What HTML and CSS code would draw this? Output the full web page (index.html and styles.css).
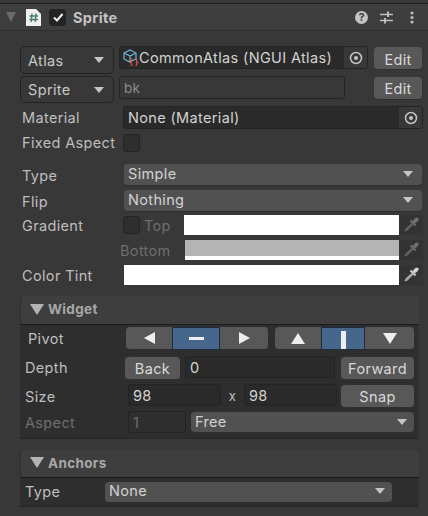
FILE: index.html
```html
<!DOCTYPE html>
<html>
<head>
    <title>Sprite Inspector</title>
    <link rel="stylesheet" href="styles.css">
</head>
<body>
    <svg class="defs">
        <defs>
            <g id="target">
                <circle cx="7" cy="7" r="5.5" fill="none" stroke="currentColor" stroke-width="1.5"/>
                <circle cx="7" cy="7" r="2" fill="currentColor"/>
            </g>
            <g id="dropper">
                <path d="M9.500 4 L12 6.500 L15 3.800 Q16.300 2.300 15.200 1 Q14 -0.200 12.300 1 Z" fill="currentColor"/>
                <path d="M7.500 3.500 L12.500 8.500" stroke="currentColor" stroke-width="1.800"/>
                <path d="M8.500 6 L10.300 7.800 L4.500 13.500 L2 14.500 L1.500 14 L2.600 11.500 Z" fill="currentColor" opacity="0.75"/>
            </g>
        </defs>
    </svg>

    <header class="header">
        <span class="fold"></span>
        <svg class="script-icon" width="15" height="17" viewBox="0 0 15 17">
            <path d="M0 0 H10 L15 5 V17 H0 Z" fill="#efefef"/>
            <path d="M6 4.500 L5.200 13 M10 4.500 L9.200 13 M3.500 7 H12 M3.500 10.500 H12" stroke="#44805f" stroke-width="1.400" fill="none"/>
        </svg>
        <span class="header-check">
            <svg width="12" height="12" viewBox="0 0 12 12"><path d="M2 6.500 L5 9.500 L10.500 3" fill="none" stroke="#eeeeee" stroke-width="2"/></svg>
        </span>
        <span class="header-title">Sprite</span>
        <span class="header-icons">
            <span class="help">?</span>
            <svg width="13" height="13" viewBox="0 0 13 13">
                <path d="M0 3.500 H13 M0 9.500 H13" stroke="#bdbdbd" stroke-width="1.300"/>
                <path d="M8 0.500 V6 M5 7 V12.500" stroke="#bdbdbd" stroke-width="2"/>
            </svg>
            <svg class="dots" width="4" height="13" viewBox="0 0 4 13">
                <circle cx="2" cy="2" r="1.600" fill="#bdbdbd"/>
                <circle cx="2" cy="6.500" r="1.600" fill="#bdbdbd"/>
                <circle cx="2" cy="11" r="1.600" fill="#bdbdbd"/>
            </svg>
        </span>
    </header>

    <main class="props">
        <div class="row row-atlas">
            <div class="popup popup-label">Atlas<span class="arrow"></span></div>
            <div class="field object-field atlas-field">
                <svg class="atlas-icon" width="16" height="17" viewBox="0 0 16 17">
                    <path d="M7 1 L13 4 V10 L7 13 L1 10 V4 Z M1 4 L7 7 L13 4 M7 7 V13" fill="none" stroke="#6fb7d6" stroke-width="1.200"/>
                    <path d="M9.500 9.500 Q8 9.500 8.500 12 Q8.500 13 7.500 13.300 Q8.500 13.600 8.500 14.600 Q8 16.500 9.500 16.500 M12.500 9.500 Q14 9.500 13.500 12 Q13.500 13 14.500 13.300 Q13.500 13.600 13.500 14.600 Q14 16.500 12.500 16.500" fill="none" stroke="#e0533c" stroke-width="1.200"/>
                </svg>
                <span class="field-text">CommonAtlas (NGUI Atlas)</span>
                <span class="picker"><svg width="14" height="14" viewBox="0 0 14 14"><use href="#target"/></svg></span>
            </div>
            <button class="btn edit-btn">Edit</button>
        </div>
        <div class="row row-sprite">
            <div class="popup popup-label">Sprite<span class="arrow"></span></div>
            <div class="field sprite-field">bk</div>
            <button class="btn edit-btn">Edit</button>
        </div>
        <div class="row row-material">
            <label class="label">Material</label>
            <div class="field object-field material-field">
                <span class="field-text">None (Material)</span>
                <span class="picker"><svg width="14" height="14" viewBox="0 0 14 14"><use href="#target"/></svg></span>
            </div>
        </div>
        <div class="row row-fixed">
            <label class="label fixed-label">Fixed Aspect</label>
            <span class="checkbox"></span>
        </div>
        <div class="row row-type">
            <label class="label">Type</label>
            <div class="popup popup-wide">Simple<span class="arrow"></span></div>
        </div>
        <div class="row row-flip">
            <label class="label">Flip</label>
            <div class="popup popup-wide">Nothing<span class="arrow"></span></div>
        </div>
        <div class="row row-gradient">
            <label class="label">Gradient</label>
            <span class="checkbox"></span>
            <span class="label-off top-label">Top</span>
            <div class="color color-top">
                <span class="swatch"></span>
                <span class="dropper off"><svg width="16" height="16" viewBox="0 0 16 16"><use href="#dropper"/></svg></span>
            </div>
        </div>
        <div class="row row-bottom">
            <span class="label-off bottom-label">Bottom</span>
            <div class="color color-bottom">
                <span class="swatch swatch-gray"></span>
                <span class="dropper off"><svg width="16" height="16" viewBox="0 0 16 16"><use href="#dropper"/></svg></span>
            </div>
        </div>
        <div class="row row-tint">
            <label class="label">Color Tint</label>
            <div class="color color-tint">
                <span class="swatch"></span>
                <span class="dropper"><svg width="16" height="16" viewBox="0 0 16 16"><use href="#dropper"/></svg></span>
            </div>
        </div>
    </main>

    <section class="panel widget-panel">
        <div class="panel-head"><span class="panel-fold"></span>Widget</div>
        <div class="panel-body">
            <div class="row row-pivot">
                <label class="pivot-label">Pivot</label>
                <div class="seg">
                    <span class="seg-btn seg-1"><i class="tri tri-left"></i></span>
                    <span class="seg-btn seg-2 on"><i class="bar-h"></i></span>
                    <span class="seg-btn seg-3"><i class="tri tri-right"></i></span>
                </div>
                <div class="seg seg-v">
                    <span class="seg-btn seg-4"><i class="tri tri-up"></i></span>
                    <span class="seg-btn seg-5 on"><i class="bar-v"></i></span>
                    <span class="seg-btn seg-6"><i class="tri tri-down"></i></span>
                </div>
            </div>
            <div class="row row-depth">
                <label class="label widget-label depth-label">Depth</label>
                <button class="btn back-btn">Back</button>
                <div class="field depth-field">0</div>
                <button class="btn forward-btn">Forward</button>
            </div>
            <div class="row row-size">
                <label class="label widget-label size-label">Size</label>
                <div class="field size-field">98</div>
                <span class="size-x">x</span>
                <div class="field size-field">98</div>
                <button class="btn snap-btn">Snap</button>
            </div>
            <div class="row row-aspect">
                <label class="label widget-label size-label off-text">Aspect</label>
                <div class="field aspect-field">1</div>
                <div class="popup aspect-popup">Free<span class="arrow small"></span></div>
            </div>
        </div>
    </section>

    <section class="panel anchors-panel">
        <div class="panel-head"><span class="panel-fold"></span>Anchors</div>
        <div class="panel-body anchors-body">
            <label class="label widget-label anchor-label">Type</label>
            <div class="popup anchor-popup">None<span class="arrow small"></span></div>
        </div>
    </section>
</body>
</html>
```

FILE: styles.css
```css
html, body {
    margin: 0;
    padding: 0;
}

body {
    width: 428px;
    height: 516px;
    overflow: hidden;
    background-color: #383838;
    color: #bebebe;
    font-family: Inter, "Noto Sans", sans-serif;
    font-size: 14.5px;
    letter-spacing: 0.35px;
    padding-top: 3px;
    box-sizing: border-box;
}

.defs {
    display: none;
}

.header {
    display: flex;
    align-items: center;
    background-color: #3e3e3e;
    border-top: 1px solid #1f1f1f;
    border-bottom: 1px solid #2e2e2e;
    box-sizing: border-box;
    height: 28px;
}

.fold {
    width: 0;
    height: 0;
    margin-left: 6px;
    border-left: 5px solid transparent;
    border-right: 5px solid transparent;
    border-top: 10px solid #6b6b6b;
}

.script-icon {
    margin-left: 10px;
}

.header-check {
    display: flex;
    align-items: center;
    justify-content: center;
    width: 17px;
    height: 17px;
    margin-left: 8px;
    background-color: #232323;
    border-radius: 3px;
}

.header-title {
    margin-left: 7px;
    font-weight: 700;
    color: #c4c4c4;
}

.header-icons {
    display: flex;
    align-items: center;
    margin-left: auto;
    padding-right: 14px;
}

.help {
    width: 13px;
    height: 13px;
    border-radius: 50%;
    background-color: #c4c4c4;
    color: #3e3e3e;
    font-size: 11px;
    font-weight: 700;
    line-height: 13px;
    text-align: center;
    letter-spacing: 0;
    margin-right: 12px;
}

.dots {
    margin-left: 17px;
}

.props {
    padding-top: 15px;
}

.row {
    display: flex;
    align-items: center;
}

.label {
    width: 101px;
    flex: none;
    margin-left: 22px;
    white-space: nowrap;
}

.fixed-label {
    padding-bottom: 2px;
}

.field {
    box-sizing: border-box;
    background-color: #2a2a2a;
    border: 1px solid #232323;
    border-radius: 3px;
    color: #d2d2d2;
    padding-left: 4px;
    display: flex;
    align-items: center;
}

.popup {
    box-sizing: border-box;
    display: flex;
    align-items: center;
    background-color: #515151;
    border-bottom: 1px solid #2e2e2e;
    border-radius: 4px;
    color: #d2d2d2;
    padding-left: 4px;
    padding-bottom: 2px;
}

.arrow {
    margin-left: auto;
    margin-right: 9px;
    width: 0;
    height: 0;
    border-left: 5px solid transparent;
    border-right: 5px solid transparent;
    border-top: 6px solid #c4c4c4;
}

.arrow.small {
    margin-right: 7px;
}

.btn {
    box-sizing: border-box;
    margin: 0;
    padding: 2px 0 0;
    border: none;
    border-bottom: 1px solid #2e2e2e;
    border-radius: 4px;
    background-color: #585858;
    color: #d8d8d8;
    font: inherit;
    letter-spacing: inherit;
}

.row-atlas {
    height: 28px;
    padding-left: 20px;
}

.popup-label {
    width: 94px;
    height: 28px;
    background-color: #383838;
    border: 1px solid #222222;
    padding-left: 7px;
    padding-bottom: 0;
    border-radius: 5px;
    color: #c8c8c8;
}

.object-field {
    padding: 0;
    overflow: hidden;
}

.atlas-field {
    width: 249px;
    height: 23px;
    margin-left: 5px;
    margin-bottom: 5px;
}

.atlas-icon {
    margin-left: 3px;
    flex: none;
}

.atlas-field .field-text {
    margin-left: 0;
}

.field-text {
    margin-left: 4px;
    white-space: nowrap;
}

.picker {
    margin-left: auto;
    width: 23px;
    height: 100%;
    display: flex;
    align-items: center;
    justify-content: center;
    background-color: #383838;
    color: #c4c4c4;
}

.edit-btn {
    width: 48px;
    height: 23px;
    margin-left: auto;
    margin-right: 6px;
    margin-bottom: 3px;
}

.row-sprite {
    height: 27px;
    margin-top: 2px;
    padding-left: 20px;
}

.row-sprite .popup-label {
    height: 27px;
}

.sprite-field {
    width: 226px;
    height: 23px;
    margin-left: 5px;
    margin-bottom: 4px;
    background-color: #383838;
    font-size: 13.5px;
    color: #8c8c8c;
}

.row-material {
    height: 23px;
    margin-top: 3px;
}

.material-field {
    width: 300px;
    height: 23px;
}

.row-fixed {
    height: 18px;
    margin-top: 5px;
}

.checkbox {
    box-sizing: border-box;
    display: block;
    flex: none;
    width: 17px;
    height: 18px;
    background-color: #2e2e2e;
    border: 1px solid #232323;
    border-radius: 3px;
}

.row-type {
    height: 22px;
    margin-top: 12px;
}

.row-flip {
    height: 22px;
    margin-top: 4px;
}

.popup-wide {
    width: 298px;
    height: 22px;
    margin-left: 1px;
}

.row-gradient {
    height: 20px;
    margin-top: 3px;
}

.label-off,
.off-text {
    color: #6e6e6e;
}

.top-label {
    margin-left: 4px;
    width: 40px;
    flex: none;
}

.color {
    display: flex;
    height: 20px;
    box-sizing: border-box;
    background-color: #2a2a2a;
    border-radius: 0 3px 3px 0;
}

.color-top {
    width: 239px;
}

.swatch {
    flex: 1;
    background-color: #ffffff;
}

.swatch-gray {
    background: linear-gradient(#b4b4b4 16px, #ffffff 16px);
}

.dropper {
    width: 24px;
    flex: none;
    display: flex;
    align-items: center;
    justify-content: center;
    color: #d0d0d0;
    background-color: #333333;
    border-radius: 0 3px 3px 0;
}

.dropper.off {
    color: #707070;
}

.row-bottom {
    height: 20px;
    margin-top: 5px;
}

.bottom-label {
    margin-left: 120px;
    width: 65px;
    flex: none;
}

.color-bottom {
    width: 238px;
}

.row-tint {
    height: 20px;
    margin-top: 5px;
}

.row-tint .label {
    width: 102px;
}

.color-tint {
    width: 299px;
}

.panel {
    width: 399px;
    margin-left: 20px;
}

.widget-panel {
    margin-top: 11px;
}

.anchors-panel {
    margin-top: 11px;
}

.panel-head {
    box-sizing: border-box;
    display: flex;
    align-items: center;
    height: 28px;
    background-color: #3e3e3e;
    border-left: 1px solid #2e2e2e;
    border-radius: 4px 4px 0 0;
    color: #a8a8a8;
    font-weight: 700;
    font-size: 13.5px;
    padding-bottom: 2px;
}

.anchors-panel .panel-head {
    height: 27px;
}

.panel-fold {
    width: 0;
    height: 0;
    margin-left: 9px;
    margin-right: 4px;
    border-left: 7px solid transparent;
    border-right: 7px solid transparent;
    border-top: 11px solid #b4b4b4;
}

.panel-body {
    box-sizing: border-box;
    height: 115px;
    background-color: #2e2e2e;
    border-top: 1px solid #1c1c1c;
    border-bottom: 1px solid #262626;
}

.row-pivot {
    height: 23px;
    margin-top: 2px;
}

.pivot-label {
    width: 98px;
    margin-left: 8px;
    flex: none;
}

.seg {
    display: flex;
    height: 23px;
}

.seg-v {
    margin-left: 7px;
}

.seg-btn {
    display: flex;
    align-items: center;
    justify-content: center;
    background-color: #585858;
    border-bottom: 1px solid #2e2e2e;
    box-sizing: border-box;
}

.seg-btn.on {
    background-color: #46668c;
    border: 1px solid #1e2c3c;
}

.seg-1, .seg-4 {
    width: 46px;
    border-radius: 4px 0 0 4px;
}

.seg-3, .seg-6 {
    border-radius: 0 4px 4px 0;
}

.seg-2,
.seg-3 {
    width: 48px;
}

.seg-5 {
    width: 44px;
    align-items: flex-end;
}

.seg-6 {
    width: 49px;
}

.tri {
    width: 0;
    height: 0;
    display: block;
}

.tri-left {
    border-top: 6px solid transparent;
    border-bottom: 6px solid transparent;
    border-right: 11px solid #eeeeee;
}

.tri-right {
    border-top: 6px solid transparent;
    border-bottom: 6px solid transparent;
    border-left: 11px solid #eeeeee;
}

.tri-up {
    border-left: 7px solid transparent;
    border-right: 7px solid transparent;
    border-bottom: 11px solid #eeeeee;
}

.tri-down {
    border-left: 7px solid transparent;
    border-right: 7px solid transparent;
    border-top: 11px solid #eeeeee;
}

.bar-h {
    width: 15px;
    height: 3px;
    background-color: #eeeeee;
}

.bar-v {
    width: 5px;
    height: 18px;
    background-color: #eeeeee;
}

.widget-label {
    margin-left: 5px;
}

.depth-label {
    width: 100px;
    padding-bottom: 2px;
}

.size-label {
    width: 103px;
}

.row-depth {
    height: 24px;
    margin-top: 6px;
}

.back-btn {
    width: 55px;
    height: 23px;
}

.depth-field {
    width: 150px;
    height: 22px;
    margin-left: 5px;
    margin-bottom: 2px;
}

.forward-btn {
    width: 73px;
    height: 23px;
    margin-left: 6px;
}

.row-size {
    height: 24px;
    margin-top: 4px;
}

.size-field {
    width: 93px;
    height: 22px;
    margin-bottom: 2px;
}

.size-x {
    width: 23px;
    flex: none;
    text-align: center;
    font-size: 13px;
}

.snap-btn {
    width: 73px;
    height: 23px;
    margin-left: 4px;
}

.row-aspect {
    height: 22px;
    margin-top: 3px;
}

.aspect-field {
    width: 58px;
    height: 22px;
    background-color: #2e2e2e;
    color: #6e6e6e;
}

.aspect-popup {
    width: 223px;
    height: 21px;
    margin-left: 5px;
    padding-bottom: 0;
}

.anchors-body {
    display: flex;
    align-items: center;
    height: 30px;
}

.anchor-label {
    width: 80px;
    padding-bottom: 1px;
}

.anchor-popup {
    width: 287px;
    height: 21px;
}
```
